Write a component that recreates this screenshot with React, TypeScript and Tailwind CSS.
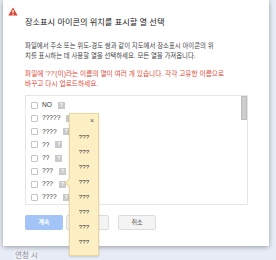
const rows = ['NO', '?????', '????', '??', '??', '???', '???', '????'];
const picks = ['???', '???', '???', '???', '???', '???', '???', '???'];

const HelpIcon = () => (
  <span className="ml-[6px] flex h-[7px] w-[7px] items-center justify-center bg-[#c9c9c9] text-[5px] font-bold leading-none text-white">
    ?
  </span>
);

const App = () => {
  return (
    <div className="relative h-[260px] w-[276px] overflow-hidden bg-[#e7ecf6] font-['Liberation_Sans','Noto_Sans_CJK_KR',sans-serif]">
      {/* Dialog */}
      <div className="ml-[3px] h-[246px] w-[266px] bg-white pl-[5px] pt-[7px] shadow-[0_1px_5px_rgba(0,0,0,0.35)]">
        {/* Warning icon */}
        <svg width="10" height="9" viewBox="0 0 10 9" className="block">
          <path d="M5 0.5 L9.6 8.6 L0.4 8.6 Z" fill="#d9432f" />
          <rect x="4.4" y="3" width="1.2" height="3" fill="white" />
          <rect x="4.4" y="6.7" width="1.2" height="1.1" fill="white" />
        </svg>

        <div className="ml-[17px]">
          <h1 className="mt-[1px] text-[8.2px] leading-[12px] text-[#222]">
            장소표시 아이콘의 위치를 표시할 열 선택
          </h1>

          <p className="mt-[12px] text-[6.4px] leading-[10px] text-[#444]">
            파일에서 주소 또는 위도-경도 쌍과 같이 지도에서 장소표시 아이콘의 위
            <br />
            치를 표시하는 데 사용할 열을 선택하세요. 모든 열을 가져옵니다.
          </p>

          <p className="mt-[8px] text-[6.7px] leading-[10px] text-[#dd4b39]">
            파일에 '??'(이)라는 이름의 열이 여러 개 있습니다. 각각 고유한 이름으로
            <br />
            바꾸고 다시 업로드하세요.
          </p>

          {/* Column list */}
          <div className="mt-[6px] flex h-[110px] w-[223px] border border-[#e6e6e6]">
            <div className="flex flex-1 flex-col pl-[5px] pt-[3px]">
              {rows.map((r, i) => (
                <div key={i} className="flex h-[13.3px] items-center">
                  <span className="h-[7px] w-[7px] rounded-[1px] border border-[#c4c4c4] bg-white" />
                  <span className="ml-[4px] text-[6.6px] leading-none text-[#333]">{r}</span>
                  <HelpIcon />
                </div>
              ))}
            </div>
            <div className="w-[6px]">
              <div className="h-[24px] border border-[#bdbdbd] bg-[#cdcdcd]" />
            </div>
          </div>

          {/* Buttons */}
          <div className="mt-[10px] flex items-center">
            <button className="flex h-[15px] w-[38px] items-center justify-center rounded-[2px] bg-[#a3c4f7] text-[6px] font-bold text-white">
              계속
            </button>
            {/* mostly hidden under the popup */}
            <button
              aria-label="업로드"
              className="ml-[3px] h-[15px] w-[43px] rounded-[2px] border border-[#dcdcdc] bg-[#f4f4f4]"
            />
            <button className="ml-[9px] flex h-[15px] w-[38px] items-center justify-center rounded-[2px] border border-[#dcdcdc] bg-[#f4f4f4] text-[6px] text-[#444]">
              취소
            </button>
          </div>
        </div>
      </div>

      {/* Map label */}
      <div className="mt-[5px] ml-[14px] w-fit bg-[#eef1f6] px-[1px] text-[7.5px] leading-[9px] text-[#8a8f99]">
        연청 시
      </div>

      {/* Yellow popup */}
      <div className="absolute left-[69px] top-[113px] h-[143px] w-[30px] border border-[#ead79b] bg-[#fcefc4] shadow-[0_1px_2px_rgba(0,0,0,0.15)]">
        <span className="absolute left-[-4px] top-[66px] h-[6px] w-[6px] rotate-45 border-b border-l border-[#ead79b] bg-[#fcefc4]" />
        <div className="flex justify-end pr-[4px] pt-[3px] text-[7px] leading-[7px] text-[#555]">×</div>
        <div className="flex flex-col items-center pt-[5px]">
          {picks.map((p, i) => (
            <div key={i} className="flex h-[15px] items-center text-[6.2px] text-[#333]">
              {p}
            </div>
          ))}
        </div>
      </div>
    </div>
  );
};

export default App;
